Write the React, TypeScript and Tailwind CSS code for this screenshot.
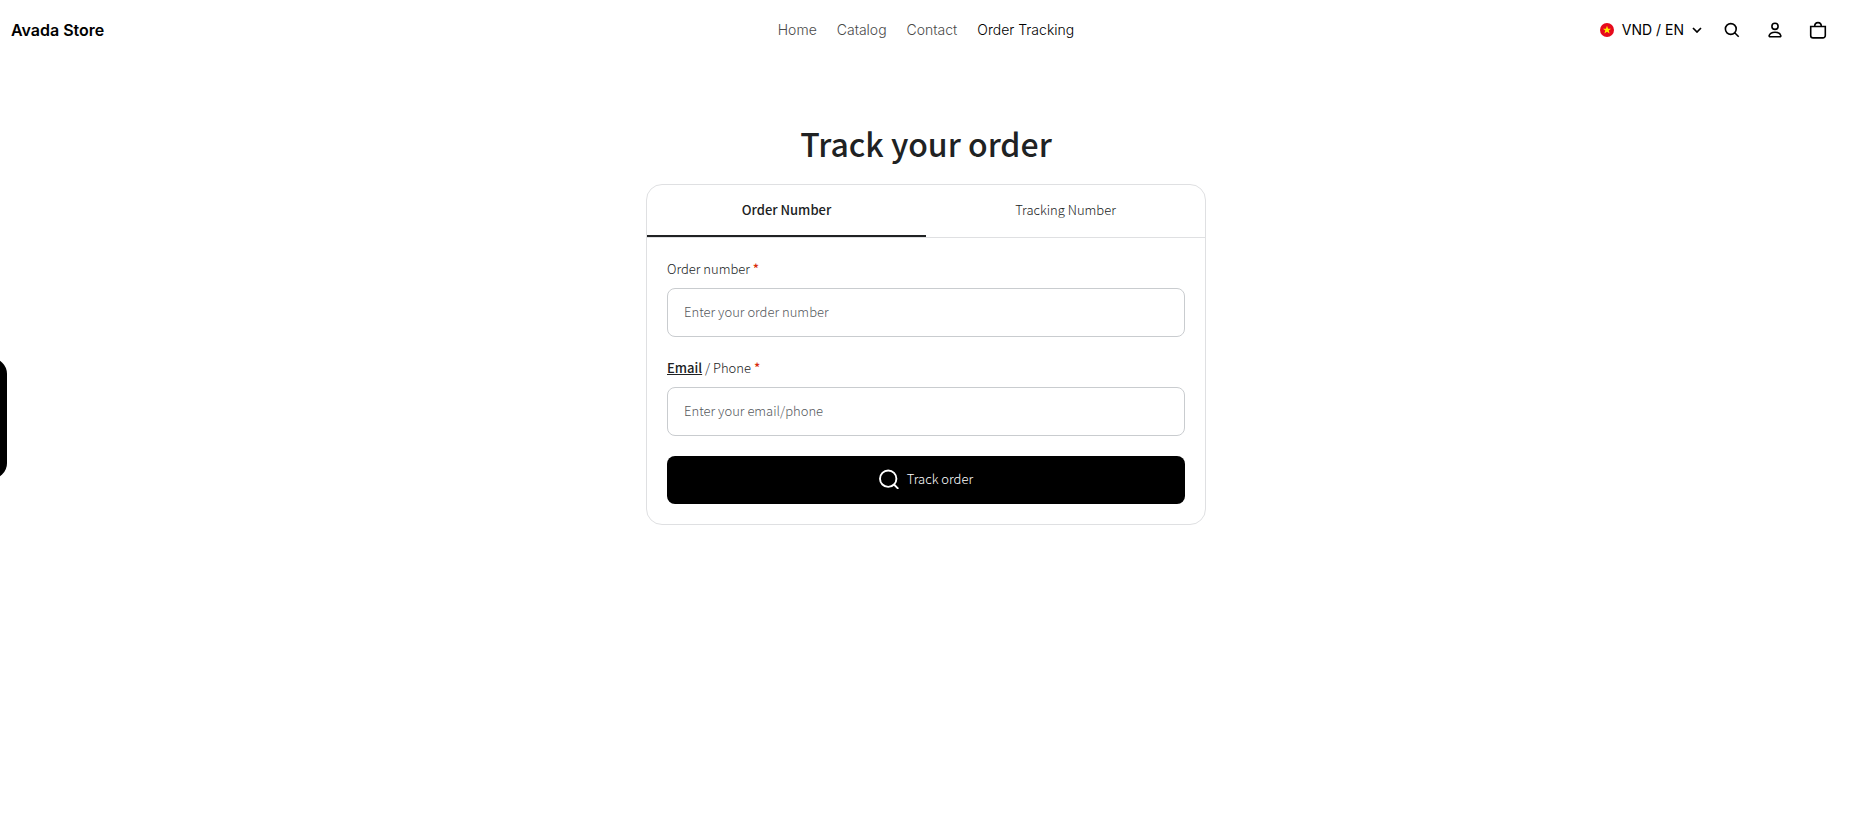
import { useState } from "react";

type TrackMode = "order" | "tracking";

const NAV_LINKS = [
  { label: "Home", active: false },
  { label: "Catalog", active: false },
  { label: "Contact", active: false },
  { label: "Order Tracking", active: true },
];

const TABS: { id: TrackMode; label: string }[] = [
  { id: "order", label: "Order Number" },
  { id: "tracking", label: "Tracking Number" },
];

const labelClass = "mb-2 block leading-[22px]";
const inputClass =
  "h-[49px] w-full rounded-lg border border-[#c9cccf] bg-white px-4 pb-[2px] text-[13px] font-light text-[#202223] placeholder:text-[#54585c] focus:border-black focus:outline-none";

function FlagIcon() {
  return (
    <svg width="14" height="14" viewBox="0 0 14 14" aria-hidden="true">
      <circle cx="7" cy="7" r="7" fill="#e60a1c" />
      <path
        d="M7 2.8l1.1 2.9h3L8.7 7.5l.9 3L7 8.8l-2.6 1.7.9-3L2.9 5.7h3z"
        fill="#ffea00"
      />
    </svg>
  );
}

function ChevronIcon() {
  return (
    <svg width="10" height="6" viewBox="0 0 10 6" fill="none" stroke="currentColor" strokeWidth="1.7" aria-hidden="true">
      <path d="M1 1l4 4 4-4" />
    </svg>
  );
}

function SearchIcon() {
  return (
    <svg width="20" height="20" viewBox="0 0 20 20" fill="none" stroke="currentColor" strokeWidth="1.6" aria-hidden="true">
      <circle cx="8.8" cy="9" r="5.4" />
      <path d="M12.7 12.8l4 4" />
    </svg>
  );
}

function AccountIcon() {
  return (
    <svg width="20" height="20" viewBox="0 0 20 20" fill="none" stroke="currentColor" strokeWidth="1.6" aria-hidden="true">
      <circle cx="10" cy="6.3" r="3.1" />
      <path d="M10 12.2c-3.2 0-5.2 1.4-5.8 3.4-.2.7.3 1.2 1 1.2h9.6c.7 0 1.2-.5 1-1.2-.6-2-2.6-3.4-5.8-3.4z" />
    </svg>
  );
}

function CartIcon() {
  return (
    <svg width="20" height="20" viewBox="0 0 20 20" fill="none" stroke="currentColor" strokeWidth="1.6" aria-hidden="true">
      <path d="M2.7 6.5h14.6v9a2.4 2.4 0 0 1-2.4 2.4H5.1a2.4 2.4 0 0 1-2.4-2.4z" />
      <path d="M6.7 6.4C6.7 3.8 7.9 2.6 10 2.6s3.3 1.2 3.3 3.8" />
    </svg>
  );
}

function Header() {
  return (
    <header className="grid h-[60px] grid-cols-[1fr_auto_1fr] items-center text-sm font-light text-black">
      <a href="#" className="ml-[11px] justify-self-start text-base font-semibold">
        Avada Store
      </a>
      <nav className="flex gap-5">
        {NAV_LINKS.map((link) => (
          <a key={link.label} href="#" className={link.active ? "text-black" : "text-[#4a4a4a]"}>
            {link.label}
          </a>
        ))}
      </nav>
      <div className="mr-6 flex items-center justify-self-end">
        <button type="button" className="mr-5 flex items-center gap-2 font-normal">
          <FlagIcon />
          <span>VND / EN</span>
          <ChevronIcon />
        </button>
        <div className="flex gap-[23px]">
          <button type="button" aria-label="Search">
            <SearchIcon />
          </button>
          <button type="button" aria-label="Account">
            <AccountIcon />
          </button>
          <button type="button" aria-label="Cart">
            <CartIcon />
          </button>
        </div>
      </div>
    </header>
  );
}

function Required() {
  return <span className="font-medium text-[#d82c0d]">*</span>;
}

function TrackForm() {
  const [mode, setMode] = useState<TrackMode>("order");
  const [number, setNumber] = useState("");
  const [contact, setContact] = useState("");
  const isOrder = mode === "order";

  return (
    <div className="w-full max-w-[560px] overflow-hidden rounded-2xl border border-[#dfe0e2] text-[13px] leading-5 font-light text-[#202223]">
      <div role="tablist" className="grid grid-cols-2 border-b border-[#dfe0e2]">
        {TABS.map((tab) => (
          <button
            key={tab.id}
            type="button"
            role="tab"
            aria-selected={mode === tab.id}
            onClick={() => setMode(tab.id)}
            className={
              mode === tab.id
                ? "h-[52px] border-b-2 border-[#202223] font-medium"
                : "h-[52px] border-b-2 border-transparent"
            }
          >
            {tab.label}
          </button>
        ))}
      </div>

      <form className="p-5" onSubmit={(e) => e.preventDefault()}>
        <label htmlFor="number" className={labelClass}>
          {isOrder ? "Order number" : "Tracking number"} <Required />
        </label>
        <input
          id="number"
          value={number}
          onChange={(e) => setNumber(e.target.value)}
          placeholder={isOrder ? "Enter your order number" : "Enter your tracking number"}
          className={inputClass}
        />

        {/* Contact is only asked for when looking up by order */}
        {isOrder && (
          <div className="mt-5">
            <label htmlFor="contact" className={labelClass}>
              <span className="font-medium underline">Email</span> / Phone <Required />
            </label>
            <input
              id="contact"
              value={contact}
              onChange={(e) => setContact(e.target.value)}
              placeholder="Enter your email/phone"
              className={inputClass}
            />
          </div>
        )}

        <button
          type="submit"
          className="mt-5 flex h-12 w-full items-center justify-center gap-2 rounded-lg bg-black pb-[2px] text-white"
        >
          <svg width="20" height="20" viewBox="0 0 20 20" fill="none" stroke="currentColor" strokeWidth="1.9" aria-hidden="true">
            <circle cx="9.2" cy="9.7" r="8.2" />
            <path d="M15 15.5l4.3 4.3" />
          </svg>
          Track order
        </button>
      </form>
    </div>
  );
}

export default function App() {
  return (
    <div className="min-h-screen bg-white pr-[15px] font-['Inter',sans-serif]">
      <Header />
      <main className="flex flex-col items-center px-4 pt-[60px] font-['Noto_Sans_CJK_SC',sans-serif]">
        <h1 className="mb-[18px] text-[32px] leading-[46px] font-medium text-[#202223]">Track your order</h1>
        <TrackForm />
      </main>
      {/* Side drawer handle, mostly tucked off the left edge */}
      <div className="fixed top-[358px] left-0 h-[121px] w-[7px] overflow-hidden">
        <div className="ml-[-33px] h-full w-10 rounded-2xl bg-black" />
      </div>
    </div>
  );
}
